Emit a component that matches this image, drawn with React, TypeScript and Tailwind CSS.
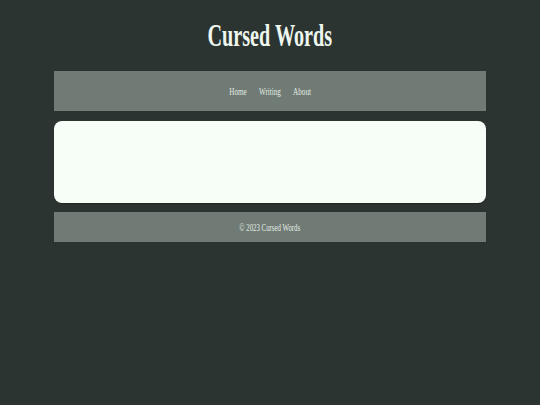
import React from 'react';

const serif = { fontFamily: '"Liberation Serif", "Times New Roman", serif' };

export default function App() {
    return (
        <div className="min-h-[405px] w-full bg-[#2b3431]" style={serif}>
            <div className="mx-auto w-[432px]">
                <header className="h-[71px] flex items-center justify-center">
                    <h1 className="inline-block scale-x-[0.65] text-[31px] font-bold leading-none text-[#eef6ee]">
                        Cursed Words
                    </h1>
                </header>

                <nav className="h-[40px] pt-[2px] bg-[#6f7b74] flex items-center justify-center">
                    <ul className="inline-flex scale-x-[0.68] gap-[18px] text-[10.5px] leading-none text-[#e4ebe4]">
                        <li>Home</li>
                        <li>Writing</li>
                        <li>About</li>
                    </ul>
                </nav>

                <main className="mt-[10px] h-[82px] rounded-lg bg-[#f7fdf7] shadow-[0_1px_1px_rgba(0,0,0,0.25)]" />

                <footer className="mt-[9px] h-[30px] pt-[2px] bg-[#6f7b74] flex items-center justify-center">
                    <p className="inline-block scale-x-[0.65] text-[10.5px] leading-none text-[#e4ebe4]">
                        © 2023 Cursed Words
                    </p>
                </footer>
            </div>
        </div>
    );
}
